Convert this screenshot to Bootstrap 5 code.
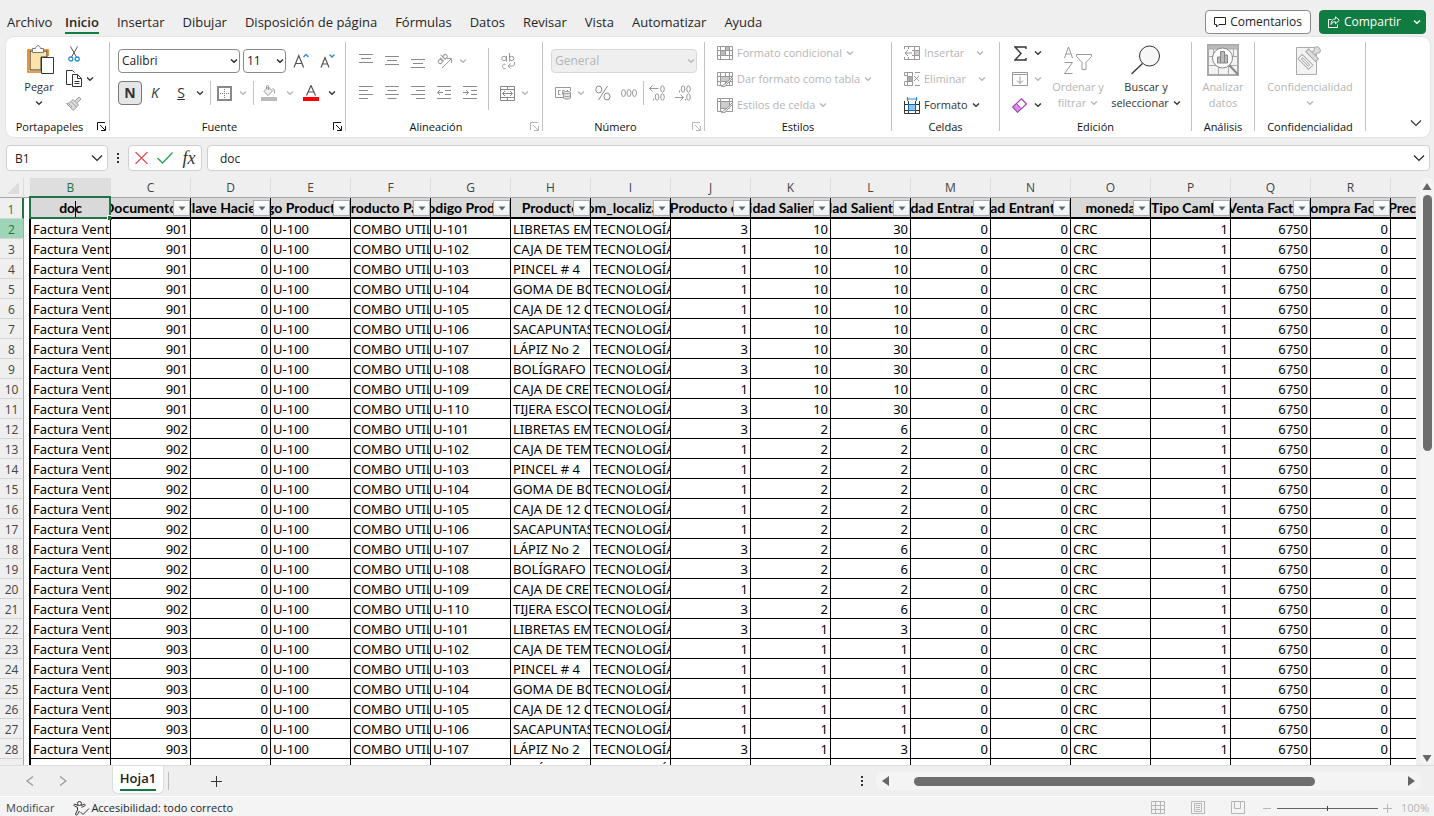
<!DOCTYPE html>
<html lang="es">
<head>
<meta charset="utf-8">
<meta name="viewport" content="width=device-width, initial-scale=1">
<title>Hoja de cálculo</title>
<link rel="stylesheet" href="https://cdn.jsdelivr.net/npm/bootstrap@5.3.0/dist/css/bootstrap.min.css">
<style>
:root{--ui:"Open Sans","Noto Sans",sans-serif;--green:#107c41;--dim:#b5b5b5}
body{font-family:var(--ui);font-size:11px;color:#222;background:#efefef}
button{color:inherit}
svg{display:block;flex:none;fill:none;stroke-width:1}
svg:not([stroke]){stroke:currentColor}
.menu{height:37px;padding:10px 8px 0 7px}
.menu-tabs{gap:18px}
.menu-tabs a{font-size:13px;line-height:24px;height:24px;color:#262626;text-decoration:none;white-space:nowrap}
.menu-tabs a.current{font-weight:600;border-bottom:2px solid var(--green)}
.menu-tabs .file{width:40px}
.menu-btn{height:24px;font-size:12px;line-height:22px;padding:0 8px;border-radius:4px}
.menu-btn.plain{background:#fff;border:1px solid #8a8a8a;color:#222}
.menu-btn.share{background:var(--green);border:1px solid var(--green);color:#fff;padding-right:4px}
.ribbon{margin:0 4px 0 6px;height:100px;padding-top:4px;background:#fff;border-radius:8px;box-shadow:0 0 2px #ccc}
.ribbon .vr{color:#999;opacity:.6}
.ribbon>.vr{height:89px;margin-top:1px;align-self:flex-start}
.group{height:96px;flex:none}
.group-body{height:78px}
.group-name{height:16px;line-height:16px;text-align:center;position:relative;color:#111}
.launch{position:absolute;right:3px;top:3px}
.tool{display:inline-flex;align-items:center;justify-content:center;flex:none;height:24px;width:26px;font-size:11px;line-height:16px;color:#333;border:0;padding:0;border-radius:4px}
.tool:disabled,.dim{color:var(--dim);opacity:1;border:0}
.tool.arrow{width:12px}
.tool.wide{width:auto;gap:4px;justify-content:flex-start}
.tool.tall{flex-direction:column;justify-content:flex-start;height:76px;white-space:nowrap}
.tall .pic{height:38px;display:flex;align-items:center}
.w20{width:20px}.w24{width:24px}.w32{width:32px}.w30{width:30px}
.pressed{background:#e6e6e6;border:1px solid #777}
.glyph{font-size:14px}
.strip{padding-top:8px;gap:8px}
.combo{height:24px;border:1px solid #8a8a8a;border-radius:4px;background:#fff;font-size:12px;line-height:20px;padding:0 3px;appearance:none;color:#222}
.pick{position:relative;display:flex}
.pick svg{position:absolute;right:2px;top:8px;pointer-events:none}
.combo:disabled{background:#efefef;border-color:#d8d8d8;color:var(--dim);opacity:1}
.formula{padding:8px 4px 7px 6px;gap:5px}
.field{height:26px;background:#fff;border:1px solid #cfcfcf;border-radius:4px;font-size:12px;line-height:24px}
.field input{border:0;background:none;outline:0;padding:1px 0 0;width:100%;font-size:12px;color:#222}
.grid-wrap{flex:1 1 0;min-height:0}
.sheet-view{overflow:hidden;flex:1 1 0;min-width:0;background:#fff}
.grid{table-layout:fixed;border-collapse:separate;border-spacing:0;width:1471px;font-family:"Noto Sans",sans-serif;font-size:13px;line-height:17px;color:#000}
.grid col.c-num{width:24px}.grid col.c-gap{width:7px}.grid col.c-data{width:80px}
.grid th,.grid td{padding:2px 0 0;height:20px;overflow:hidden;white-space:nowrap;font-weight:400}
.grid thead th{background:#efefef;color:#444;font-family:var(--ui);font-size:12px;text-align:center;padding:0;border-bottom:1px solid #a6a6a6;border-right:1px solid #dcdcdc}
.grid thead th.on{background:#dedede;color:#217346}
.grid tbody th{background:#efefef;color:#444;font-family:var(--ui);font-size:12px;text-align:center;border-right:1px solid #a6a6a6;border-bottom:1px solid #d4d4d4}
.grid tbody th.on{background:#9fd5b7;color:#217346}
.grid tbody th.cur{border-right:2px solid #217346;color:#217346}
.grid td{border-right:1px solid #000;border-bottom:1px solid #000;padding:2px 2px 0;background:#fff}
.grid td.gap-col{border-bottom:0;border-right:2px solid #000}
.grid td.n{text-align:right}
.grid .titles td{height:21px;padding:0;line-height:19px;background:#d9d9d9;border-bottom:2px solid #000;position:relative;font-family:Lato,"Noto Sans",sans-serif;font-size:14px;font-weight:700}
.grid .titles td.gap-col{background:#fff;border-bottom:0}
.grid .titles td.sel{overflow:visible}
.title-text{display:flex;justify-content:center;overflow:hidden}
.title-text span{flex:none}
.filter{position:absolute;right:0;top:2px;width:17px;height:16px;padding:0;border:1px solid #a9adb5;background:linear-gradient(#fff,#eceef2);display:flex;align-items:center;justify-content:center;color:#666}
.sel-box{position:absolute;inset:-2px -1px -2px -2px;border:2px solid #217346}
.sel-box::after{content:"";position:absolute;right:-3px;bottom:-3px;width:5px;height:5px;background:#217346;border:1px solid #fff;border-width:1px 0 0 1px}
.caret{display:inline-block;width:1px;height:16px;background:#000;margin-right:-1px;vertical-align:middle}
.track{background:#f4f4f4;border-radius:7px}
.track-v{width:14px;margin-left:4px;padding:4px 0 2px}
.track-h{width:38%;height:18px;margin:0 13px 0 8px;padding:0 5px}
.thumb{background:#6e6e6e;border-radius:5px}
.sheets{height:31px;background:#efefef;border-top:1px solid #dcdcdc}
.sheet-tab{background:#fff;border:1px solid #dcdcdc;border-top:0;border-radius:0 0 6px 6px;height:28px;width:52px;margin-left:36px;color:#222;text-decoration:none;font-size:13px;font-weight:600;display:flex;justify-content:center;align-self:flex-start}
.sheet-tab span{height:25px;line-height:24px;border-bottom:2px solid var(--green)}
.status{height:20px;padding-top:3px;background:#f4f4f4;border-top:1px solid #fff;color:#444}
.zoom-range{appearance:none;width:101px;height:9px;background:linear-gradient(#666,#666) center/100% 1px no-repeat}
.zoom-range::-webkit-slider-thumb{appearance:none;width:1px;height:5px;background:#444;border:0;border-radius:0}
</style>
</head>
<body class="vh-100 d-flex flex-column overflow-hidden">

<svg width="0" height="0" class="position-absolute" aria-hidden="true">
  <symbol id="chev" viewBox="0 0 8 8"><path d="M1 2.5 4 5.3 7 2.5" stroke-width="1.3"/></symbol>
  <symbol id="chev-lg" viewBox="0 0 12 8"><path d="M1 1.5 6 6.5 11 1.5" stroke-width="1.2"/></symbol>
  <symbol id="launch" viewBox="0 0 9 9"><path d="M.5 8V.5H8M3 3l5 5M8.5 4v4.5H4"/></symbol>
  <symbol id="tri" viewBox="0 0 8 5"><path d="M.5.5h7L4 4.5z" fill="currentColor" stroke="none"/></symbol>
</svg>

<header class="menu d-flex align-items-start justify-content-between">
  <nav class="menu-tabs d-flex" aria-label="Cinta">
    <a href="#" class="file">Archivo</a><a href="#" class="current">Inicio</a><a href="#">Insertar</a><a href="#">Dibujar</a><a href="#">Disposición de página</a><a href="#">Fórmulas</a><a href="#">Datos</a><a href="#">Revisar</a><a href="#">Vista</a><a href="#">Automatizar</a><a href="#">Ayuda</a>
  </nav>
  <div class="d-flex gap-2">
    <button class="btn menu-btn plain d-flex align-items-center gap-1"><svg width="12" height="12" viewBox="0 0 12 12"><path d="M.5 1.5h11v7H5L2.5 11V8.500h-2z"/></svg>Comentarios</button>
    <button class="btn menu-btn share d-flex align-items-center gap-1"><svg width="12" height="12" viewBox="0 0 12 12"><path d="M3.500 3.500h-3v8h9V8.500M7.500.8l3.800 3.500-3.800 3.500V5.800C5 5.800 4 6.800 3 8.500 3 5.500 4.500 3 7.500 2.800z"/></svg>Compartir<svg width="8" height="8" class="ms-2"><use href="#chev"/></svg></button>
  </div>
</header>

<section class="ribbon d-flex align-items-start" aria-label="Inicio">

  <div class="group" style="width:103px">
    <div class="group-body d-flex ps-2">
      <button class="btn tool tall" style="width:50px"><span class="pic ps-1">
        <svg width="28" height="30" viewBox="0 0 28 30"><path d="M3 6h17v6h-6v13H3z" fill="#fde3a8"/><path d="M7 5H1v22h13M17 5h4v6" stroke="#e07c10" stroke-width="1.600"/><path d="M5.500 7.500v-4h3C9-.2 13-.2 13.500 3.500h3v4z" fill="#fff" stroke="#777"/><path d="M14.500 12.500h12v16h-12z" fill="#fff" stroke="#333"/></svg></span>
        <span>Pegar</span><svg width="8" height="8" class="mt-1"><use href="#chev"/></svg></button>
      <div class="d-flex flex-column" style="width:40px">
        <button class="btn tool" style="height:25px;width:20px" aria-label="Cortar"><svg width="12" height="16" viewBox="0 0 12 16"><path d="M2.500.500 8.500 11M9.500.500 3.500 11" stroke="#555"/><circle cx="2.800" cy="13" r="2" stroke="#2a8dd4" stroke-width="1.300"/><circle cx="9.200" cy="13" r="2" stroke="#2a8dd4" stroke-width="1.300"/></svg></button>
        <div class="d-flex"><button class="btn tool" style="height:25px;width:20px" aria-label="Copiar"><svg width="16" height="17" viewBox="0 0 16 17"><path d="M5.500 14.500h-5V.500h6l2 2M6.500 4.500h5l4 4v8h-9zM11.500 4.500v4h4M8.500 11.500h5M8.500 13.500h5"/></svg></button><button class="btn tool arrow" style="height:25px" aria-label="Opciones de copiar"><svg width="8" height="8"><use href="#chev"/></svg></button></div>
        <button class="btn tool" disabled style="height:25px;width:20px" aria-label="Copiar formato"><svg width="16" height="15" viewBox="0 0 16 15" stroke="#999"><path d="m9 5 4-4 2 2-4 4M7 3.500 12.500 9 10.500 11 5 5.500zM5 5.500C4 7 2.500 7.500.500 7.500L7 14.300c1-.8 3-2 3.500-3.300M3 8l1 1.500M5 9.500l1 2" fill="#ddd"/></svg></button>
      </div>
    </div>
    <div class="group-name pe-3">Portapapeles<svg class="launch" width="9" height="9"><use href="#launch"/></svg></div>
  </div>
  <div class="vr"></div>

  <div class="group" style="width:235px">
    <div class="group-body d-flex flex-column strip ps-2">
      <div class="d-flex">
        <div class="pick"><select class="combo" style="width:122px" aria-label="Fuente"><option>Calibri</option></select><svg width="8" height="8"><use href="#chev"/></svg></div>
        <div class="pick" style="margin-left:3px"><select class="combo" style="width:43px" aria-label="Tamaño"><option>11</option></select><svg width="8" height="8"><use href="#chev"/></svg></div>
        <button class="btn tool" style="margin-left:2px" aria-label="Aumentar"><svg width="16" height="16" viewBox="0 0 16 16"><path d="M1 14.500 5.800 2.500l4.800 12M2.800 10.500h6" stroke="#555" stroke-width="1.200"/><path d="M10.500 4 13 1.500 15.500 4" stroke="#2a8dd4" stroke-width="1.300"/></svg></button>
        <button class="btn tool" aria-label="Disminuir"><svg width="16" height="16" viewBox="0 0 16 16"><path d="M2 14.500 6 4.500l4 10M3.500 11h5" stroke="#555" stroke-width="1.200"/><path d="M10.500 1.500 13 4l2.500-2.500" stroke="#2a8dd4" stroke-width="1.300"/></svg></button>
      </div>
      <div class="d-flex">
        <button class="btn tool w24 pressed glyph"><b>N</b></button>
        <button class="btn tool glyph"><i>K</i></button>
        <button class="btn tool glyph"><u>S</u></button>
        <button class="btn tool arrow" aria-label="Subrayado"><svg width="8" height="8"><use href="#chev"/></svg></button>
        <div class="vr ms-1"></div>
        <button class="btn tool" disabled aria-label="Bordes"><svg width="15" height="15" viewBox="0 0 15 15"><path d="M1 1h13v13H1z" stroke="#888" stroke-width="2"/><path d="M7.500 3v9M3 7.500h9" stroke="#777" stroke-dasharray="1 1"/></svg></button>
        <button class="btn tool arrow" disabled aria-label="Tipos de borde"><svg width="8" height="8"><use href="#chev"/></svg></button>
        <div class="vr ms-1"></div>
        <button class="btn tool w30" disabled aria-label="Relleno"><svg width="16" height="16" viewBox="0 0 16 16"><path d="M0 12h16v4H0z" fill="#bbb" stroke="none"/><path d="m3 6.500 4.500-4.500 4 4L7 10.500zM7.500 5V1.500C7.500 0 5.500 0 5.500 1.500V4M11.500 3.500c2 .5 2 2 2 5" stroke="#999" fill="#eee"/></svg></button>
        <button class="btn tool arrow" disabled aria-label="Color de relleno"><svg width="8" height="8"><use href="#chev"/></svg></button>
        <button class="btn tool w30" aria-label="Color de fuente"><svg width="16" height="16" viewBox="0 0 16 16"><path d="M0 12h16v4H0z" fill="#f00" stroke="none"/><path d="M3.500 10.500 8 .500l4.500 10M5 7h6" stroke="#555" stroke-width="1.200"/></svg></button>
        <button class="btn tool arrow" aria-label="Colores de fuente"><svg width="8" height="8"><use href="#chev"/></svg></button>
      </div>
    </div>
    <div class="group-name pe-3">Fuente<svg class="launch" width="9" height="9"><use href="#launch"/></svg></div>
  </div>
  <div class="vr"></div>

  <div class="group" style="width:196px">
    <div class="group-body d-flex" style="padding-left:7px">
      <div class="d-flex flex-column strip" style="width:135px">
        <div class="d-flex">
          <button class="btn tool" disabled aria-label="Arriba"><svg width="14" height="14" viewBox="0 0 14 14" stroke="#8a8a8a"><path d="M0 .500h14M2 4.500h10M0 8.500h14"/></svg></button>
          <button class="btn tool" disabled aria-label="Medio"><svg width="14" height="14" viewBox="0 0 14 14" stroke="#8a8a8a"><path d="M0 2.500h14M2 6.500h10M0 10.500h14"/></svg></button>
          <button class="btn tool" disabled aria-label="Abajo"><svg width="14" height="14" viewBox="0 0 14 14" stroke="#8a8a8a"><path d="M0 5.500h14M2 9.500h10M0 13.500h14"/></svg></button>
          <button class="btn tool" disabled aria-label="Orientación"><svg width="17" height="16" viewBox="0 0 17 16" stroke="#999"><g transform="rotate(-45 6 6)"><circle cx="3" cy="6.500" r="2"/><path d="M5.500 4v5M8 2v7"/><circle cx="10" cy="6.500" r="2"/></g><path d="m6 15 9.500-9.500M11 5.500h4.500V10"/></svg></button>
          <button class="btn tool arrow" disabled aria-label="Orientaciones"><svg width="8" height="8"><use href="#chev"/></svg></button>
        </div>
        <div class="d-flex">
          <button class="btn tool" disabled aria-label="Izquierda"><svg width="14" height="14" viewBox="0 0 14 14" stroke="#8a8a8a"><path d="M0 .500h14M0 4.500h9M0 8.500h14M0 12.500h9"/></svg></button>
          <button class="btn tool" disabled aria-label="Centro"><svg width="14" height="14" viewBox="0 0 14 14" stroke="#8a8a8a"><path d="M0 .500h14M2.500 4.500h9M0 8.500h14M2.500 12.500h9"/></svg></button>
          <button class="btn tool" disabled aria-label="Derecha"><svg width="14" height="14" viewBox="0 0 14 14" stroke="#8a8a8a"><path d="M0 .500h14M5 4.500h9M0 8.500h14M5 12.500h9"/></svg></button>
          <button class="btn tool" disabled aria-label="Menos sangría"><svg width="14" height="14" viewBox="0 0 14 14" stroke="#8a8a8a"><path d="M0 .500h14M8 4.500h6M8 8.500h6M0 12.500h14M6 6.500H.500M3 4 .500 6.500 3 9"/></svg></button>
          <button class="btn tool" disabled aria-label="Más sangría"><svg width="14" height="14" viewBox="0 0 14 14" stroke="#8a8a8a"><path d="M0 .500h14M8 4.500h6M8 8.500h6M0 12.500h14M0 6.500h5.500M3 4l2.500 2.500L3 9"/></svg></button>
        </div>
      </div>
      <div class="vr" style="height:62px;margin-top:7px"></div>
      <div class="strip d-flex flex-column" style="padding-left:6px">
        <button class="btn tool" disabled aria-label="Ajustar texto"><svg width="16" height="17" viewBox="0 0 16 17" stroke="#999"><circle cx="4" cy="5.500" r="2.200"/><path d="M6.500 3v5.500M9.500 0v8.500"/><circle cx="11.700" cy="5.500" r="2.200"/><path d="M5.500 11.500c-4-1.500-4 5.500 0 4M14.500 9v2c0 1.500-1 2-2 2H8M10.500 10.500 8 13l2.500 2.500"/></svg></button>
        <div class="d-flex"><button class="btn tool" style="width:24px" disabled aria-label="Combinar"><svg width="15" height="15" viewBox="0 0 15 15" stroke="#888"><path d="M.500.500h14v14H.500zM0 3.500h15M0 11.500h15M7.500 0v3M7.500 12v3M2.500 7.500h10M5 5 2.500 7.500 5 10M10 5l2.500 2.500L10 10"/></svg></button><button class="btn tool arrow" disabled aria-label="Opciones de combinar"><svg width="8" height="8"><use href="#chev"/></svg></button></div>
      </div>
    </div>
    <div class="group-name pe-3">Alineación<svg class="launch dim" width="9" height="9"><use href="#launch"/></svg></div>
  </div>
  <div class="vr"></div>

  <div class="group" style="width:161px">
    <div class="group-body d-flex flex-column strip ps-2">
      <div class="pick" style="width:146px"><select class="combo w-100" disabled aria-label="Formato de número"><option>General</option></select><svg class="dim" width="8" height="8"><use href="#chev"/></svg></div>
      <div class="d-flex">
        <button class="btn tool w24" disabled aria-label="Moneda"><svg width="17" height="14" viewBox="0 0 17 14" stroke="#999"><path d="M8 11.500H.500v-10h15V5M5.500 4.500h-2v4h2M7.500 8.500v-4h2M12 4.500h1"/><path d="M8.500 6.500c0-1.500 7-1.500 7 0v5.500c0 1.500-7 1.500-7 0zM8.500 6.500c0 1.500 7 1.500 7 0M8.500 9.300c0 1.500 7 1.500 7 0" fill="#ddd"/></svg></button>
        <button class="btn tool arrow" disabled aria-label="Monedas"><svg width="8" height="8"><use href="#chev"/></svg></button>
        <button class="btn tool w32" disabled aria-label="Porcentaje"><svg width="16" height="16" viewBox="0 0 16 16" stroke="#888"><ellipse cx="3.800" cy="4.500" rx="3" ry="3.500"/><ellipse cx="12" cy="11.500" rx="3" ry="3.500"/><path d="M12.500 1 3.500 15"/></svg></button>
        <button class="btn tool w20" disabled aria-label="Millares"><svg width="16" height="8" viewBox="0 0 16 8" stroke="#999"><ellipse cx="2.500" cy="4" rx="2" ry="3.500"/><ellipse cx="8" cy="4" rx="2" ry="3.500"/><ellipse cx="13.500" cy="4" rx="2" ry="3.500"/></svg></button>
        <div class="vr ms-1"></div>
        <button class="btn tool" disabled aria-label="Aumentar decimales"><svg width="16" height="16" viewBox="0 0 16 16" stroke="#999"><ellipse cx="13.500" cy="4" rx="1.800" ry="3.200"/><ellipse cx="8" cy="12" rx="1.800" ry="3.200"/><ellipse cx="13.500" cy="12" rx="1.800" ry="3.200"/><path d="M9.500 3.500H.500M3.500.500l-3 3 3 3M4.500 13.500v2"/></svg></button>
        <button class="btn tool" disabled aria-label="Disminuir decimales"><svg width="16" height="16" viewBox="0 0 16 16" stroke="#999"><ellipse cx="8" cy="4" rx="1.800" ry="3.200"/><ellipse cx="13.500" cy="4" rx="1.800" ry="3.200"/><ellipse cx="13.500" cy="12" rx="1.800" ry="3.200"/><path d="M0 12.500h8.500M5.500 9.500l3 3-3 3M4.500 5.500v2M10.500 14v1.500"/></svg></button>
      </div>
    </div>
    <div class="group-name pe-3">Número<svg class="launch dim" width="9" height="9"><use href="#launch"/></svg></div>
  </div>
  <div class="vr"></div>

  <div class="group" style="width:186px">
    <div class="group-body d-flex flex-column align-items-start" style="gap:2px;padding-left:12px">
      <button class="btn tool wide" disabled><svg width="16" height="15" viewBox="0 0 16 15" stroke="#999"><path d="M.500.500h15v13H.500zM0 4.500h16M0 9.500h16M3.500 0v14M8.500 0v4M12.500 0v14"/><path d="M3.500 4.500h5v5h-5zM8.500.500h4v4h-4z" fill="#bbb"/></svg>Formato condicional<svg width="8" height="8"><use href="#chev"/></svg></button>
      <button class="btn tool wide" disabled><svg width="16" height="15" viewBox="0 0 16 15" stroke="#999"><path d="M.500.500h15v13H.500zM0 4.500h16M0 9.500h16M3.500 0v14M8.500 0v14M12.500 0v14"/><path d="M3.500 4.500h9v5h-9z" fill="#ccc"/><path d="m16 4-8 8c-2 0-1 2-4 2 3 1.500 5.500 0 5.500-1.500L16 6z" fill="#eee"/></svg>Dar formato como tabla<svg width="8" height="8"><use href="#chev"/></svg></button>
      <button class="btn tool wide" disabled><svg width="16" height="15" viewBox="0 0 16 15" stroke="#999"><path d="M.500.500h15v13H.500zM0 3.500h16M3.500 0v14M12.500 0v4"/><path d="M3.500 3.500h9v7h-9z" fill="#ccc"/><path d="m16 4-8 8c-2 0-1 2-4 2 3 1.500 5.500 0 5.500-1.500L16 6z" fill="#eee"/></svg>Estilos de celda<svg width="8" height="8"><use href="#chev"/></svg></button>
    </div>
    <div class="group-name">Estilos</div>
  </div>
  <div class="vr"></div>

  <div class="group" style="width:107px">
    <div class="group-body d-flex flex-column align-items-start" style="gap:2px;padding-left:12px">
      <button class="btn tool wide" disabled><svg width="16" height="15" viewBox="0 0 16 15" stroke="#999"><path d="M.500 3V.500h15v13H.500V11M8 4.500h8M8 9.500h8M4.500 0v3M4.500 11v3M10.500 0v14M8 7H1M4 4 1 7l3 3"/><path d="M10.500 4.500h5v5h-5z" fill="#ccc"/></svg>Insertar<svg width="8" height="8" class="ms-2"><use href="#chev"/></svg></button>
      <button class="btn tool wide" disabled><svg width="16" height="15" viewBox="0 0 16 15" stroke="#999"><path d="M9 .500H.500v3h3v6h-3v4H9M3.500 0v14M8.500 0v4M8.500 10v4M10 4l5 5M15 4l-5 5M11 .500h5M11 13.500h5"/><path d="M3.500 4.500h5v5h-5z" fill="#aaa"/></svg>Eliminar<svg width="8" height="8" class="ms-2"><use href="#chev"/></svg></button>
      <button class="btn tool wide"><svg width="16" height="17" viewBox="0 0 16 17"><path d="M.500 4v12.500h15V4M0 7.500h16M0 13.500h16M4.500 4v12M11.500 4v12"/><path d="M4.500 7.500h7v6h-7z" fill="#8fc6f2" stroke="#0f6cbd"/><path d="M3.500 0v4M12.500 0v4M4 2h8" stroke="#2a8dd4" stroke-width="1.200"/></svg>Formato<svg width="8" height="8"><use href="#chev"/></svg></button>
    </div>
    <div class="group-name">Celdas</div>
  </div>
  <div class="vr"></div>

  <div class="group" style="width:191px">
    <div class="group-body d-flex" style="padding-left:10px">
      <div class="d-flex flex-column" style="gap:2px;width:38px">
        <div class="d-flex"><button class="btn tool w20" aria-label="Suma"><svg width="13" height="15" viewBox="0 0 13 15"><path d="M12 3V1H1l6 6.500L1 14h11v-2" stroke-width="1.400"/></svg></button><button class="btn tool arrow" style="margin-left:2px" aria-label="Funciones"><svg width="8" height="8"><use href="#chev"/></svg></button></div>
        <div class="d-flex"><button class="btn tool w20" disabled aria-label="Rellenar"><svg width="16" height="14" viewBox="0 0 16 14" stroke="#999"><path d="M.500.500h15v13H.500zM0 2.500h16M8 4.500v7M5 8.500l3 3 3-3"/></svg></button><button class="btn tool arrow" style="margin-left:2px" disabled aria-label="Opciones de relleno"><svg width="8" height="8"><use href="#chev"/></svg></button></div>
        <div class="d-flex"><button class="btn tool w20" aria-label="Borrar"><svg width="16" height="15" viewBox="0 0 16 15" stroke="#a23fb5"><path d="M.800 9 9.500.800 14.500 6l-9 8.200z" fill="#fff" stroke-width="1.200"/><path d="M.800 9 4.500 5.500 9.300 10.700 5.500 14.200z" fill="#d58ee0"/></svg></button><button class="btn tool arrow" style="margin-left:2px" aria-label="Opciones de borrar"><svg width="8" height="8"><use href="#chev"/></svg></button></div>
      </div>
      <button class="btn tool tall" disabled style="width:60px"><span class="pic"><svg width="30" height="29" viewBox="0 0 30 29" stroke="#999"><path d="M1.500 12 5.500 1l4 11M3 8h5M1.500 16.500h8L1.500 27.500h8M13.500 8.500h15v2l-5.500 6v7h-4v-7l-5.500-6z"/></svg></span><span>Ordenar y</span><span class="d-flex align-items-center gap-1">filtrar<svg width="8" height="8"><use href="#chev"/></svg></span></button>
      <button class="btn tool tall" style="width:76px"><span class="pic"><svg width="30" height="30" viewBox="0 0 30 30"><circle cx="18.500" cy="11" r="10" fill="#f7f7f7"/><path d="M11.500 18.500.500 29" stroke-width="1.300"/></svg></span><span>Buscar y</span><span class="d-flex align-items-center gap-1">seleccionar<svg width="8" height="8"><use href="#chev"/></svg></span></button>
    </div>
    <div class="group-name">Edición</div>
  </div>
  <div class="vr"></div>

  <div class="group" style="width:62px">
    <div class="group-body d-flex justify-content-center">
      <button class="btn tool tall w-100" disabled><span class="pic"><svg width="32" height="32" viewBox="0 0 32 32" stroke="#aaa"><path d="M1 1h30v30H1z" stroke-width="2" fill="#f3f3f3"/><path d="M1 1h30v4H1z" fill="#bbb"/><path d="M2 12.500h28M2 21.500h28M11.500 22v9M21.500 22v9M6.500 5v7M26.500 5v7"/><circle cx="15.500" cy="14" r="10" fill="#fff" stroke="#888"/><path d="M10.500 13h3v6h-3zM13.500 7.500h4V19h-4zM17.500 11h3v8h-3z" fill="#bbb" stroke="#888"/><path d="m22.500 21.500 8.500 9" stroke="#888" stroke-width="2"/></svg></span><span>Analizar</span><span>datos</span></button>
    </div>
    <div class="group-name">Análisis</div>
  </div>
  <div class="vr"></div>

  <div class="group" style="width:110px">
    <div class="group-body d-flex justify-content-center">
      <button class="btn tool tall w-100" disabled><span class="pic"><svg width="28" height="32" viewBox="0 0 28 32" stroke="#aaa"><path d="M.500 3.500h20v27H.500z" fill="#f3f3f3"/><g transform="rotate(45 14 14)"><path d="M6 17h15v6H6z" fill="#fff"/><path d="M8.500 19h10v2h-10z"/><path d="M6.500 8.500h14v4h-14zM11.500 8.500v-3c-2-1.500-2-5 2-5s4 3.500 2 5v3" fill="#ddd"/></g></svg></span><span>Confidencialidad</span><svg width="8" height="8" class="mt-1"><use href="#chev"/></svg></button>
    </div>
    <div class="group-name">Confidencialidad</div>
  </div>
  <div class="vr"></div>
  <button class="btn tool ms-auto align-self-end mb-1" aria-label="Contraer la cinta" style="width:28px;height:20px"><svg width="12" height="8"><use href="#chev-lg"/></svg></button>
</section>

<section class="formula d-flex align-items-center">
  <div class="field d-flex align-items-center px-1" style="width:102px"><input class="ps-1" value="B1" aria-label="Cuadro de nombres"><svg width="12" height="8"><use href="#chev-lg"/></svg></div>
  <svg width="10" height="12" viewBox="0 0 10 12"><path d="M4 1h2v2H4zM4 5h2v2H4zM4 9h2v2H4z" fill="#333" stroke="none"/></svg>
  <div class="field d-flex align-items-center justify-content-between px-1" style="width:74px">
    <button class="btn tool w20" style="width:16px" aria-label="Cancelar"><svg width="13" height="12" viewBox="0 0 13 12"><path d="m.500 0 12 12M12.500 0l-12 12" stroke="#e5484d" stroke-width="1.200"/></svg></button>
    <button class="btn tool w24" aria-label="Introducir"><svg width="16" height="12" viewBox="0 0 16 12"><path d="m.500 6 5 5L15.500.500" stroke="#2f9e55" stroke-width="1.300"/></svg></button>
    <button class="btn tool" style="width:16px" aria-label="Insertar función"><i style="font:italic 18px 'Liberation Serif',serif">fx</i></button>
  </div>
  <div class="field d-flex align-items-center flex-grow-1 ps-2 pe-1"><input class="ps-1" value="doc" aria-label="Barra de fórmulas"><svg width="12" height="8"><use href="#chev-lg"/></svg></div>
</section>

<main class="grid-wrap d-flex">
  <div class="sheet-view">
    <table class="grid" id="grid">
      <colgroup id="cols"><col class="c-num"><col class="c-gap"></colgroup>
      <thead><tr id="letters"><th><svg class="ms-auto me-1" width="12" height="12" viewBox="0 0 12 12"><path d="M12 0v12H0z" fill="#dcdcdc" stroke="none"/></svg></th><th></th></tr></thead>
      <tbody id="rows"></tbody>
    </table>
  </div>
  <div class="track track-v d-flex flex-column align-items-center">
    <svg width="10" height="9" viewBox="0 0 10 9"><path d="M5 1 9.500 8h-9z" fill="#666" stroke="none"/></svg>
    <div class="thumb mt-1" style="width:9px;height:44%"></div>
    <svg class="mt-auto" width="10" height="9" viewBox="0 0 10 9"><path d="M5 8 .500 1h9z" fill="#666" stroke="none"/></svg>
  </div>
</main>

<section class="sheets d-flex align-items-center">
  <button class="btn tool" style="margin-left:17px;color:#999" aria-label="Hoja anterior"><svg width="8" height="10" viewBox="0 0 8 10"><path d="M7 .500 1 5l6 4.500" stroke-width="1.200"/></svg></button>
  <button class="btn tool" style="margin-left:7px;color:#999" aria-label="Hoja siguiente"><svg width="8" height="10" viewBox="0 0 8 10"><path d="m1 .500 6 4.500-6 4.500" stroke-width="1.200"/></svg></button>
  <a href="#" class="sheet-tab"><span>Hoja1</span></a>
  <div class="vr ms-1" style="height:18px;align-self:center"></div>
  <button class="btn tool" style="margin-left:34px" aria-label="Hoja nueva"><svg width="11" height="11" viewBox="0 0 11 11"><path d="M5.500 0v11M0 5.500h11"/></svg></button>
  <svg class="ms-auto" width="10" height="12" viewBox="0 0 10 12"><path d="M3 1h2v2H3zM3 5h2v2H3zM3 9h2v2H3z" fill="#333" stroke="none"/></svg>
  <div class="track track-h d-flex align-items-center">
    <svg width="8" height="10" viewBox="0 0 8 10"><path d="M8 0v10L1 5z" fill="#666" stroke="none"/></svg>
    <div class="thumb" style="height:9px;width:75%;margin-left:25px"></div>
    <svg class="ms-auto" width="8" height="10" viewBox="0 0 8 10"><path d="M0 0v10l7-5z" fill="#666" stroke="none"/></svg>
  </div>
</section>

<footer class="status d-flex align-items-center">
  <span style="margin-left:6px">Modificar</span>
  <svg style="margin-left:19px" width="18" height="15" viewBox="0 0 18 15" stroke="#333"><circle cx="6.500" cy="2.500" r="2"/><path d="M5 4.500 1.500 3C.500 4 1 5 2 5.300l2.500 1V9l-2 4c0 1.300 1.500 1.500 2 .500L6.500 10M8 4.500 11.500 3c1 1 .500 2-.500 2.300l-2.500 1M7.500 11l2.500 2.500 6-6"/></svg>
  <span class="text-dark">Accesibilidad: todo correcto</span>
  <div class="ms-auto d-flex align-items-center dim">
    <button class="btn tool dim" aria-label="Normal" style="height:16px"><svg width="14" height="14" viewBox="0 0 14 14"><path d="M.500.500h13v12H.500zM0 4.500h14M0 8.500h14M4.500 0v13M9.500 0v13"/></svg></button>
    <button class="btn tool dim" aria-label="Diseño de página" style="height:16px;margin-left:14px"><svg width="14" height="14" viewBox="0 0 14 14"><path d="M.500.500h13v12H.500zM3.500 2.500h7v8h-7zM5 4.500h4M5 6.500h4M5 8.500h4"/></svg></button>
    <button class="btn tool dim" aria-label="Salto de página" style="height:16px;margin-left:14px"><svg width="14" height="14" viewBox="0 0 14 14"><path d="M.500.500h13v12H.500zM3.500 0v7.500h6V0"/></svg></button>
    <button class="btn tool dim w20" aria-label="Alejar" style="height:16px;margin-left:6px"><svg width="8" height="8" viewBox="0 0 8 8"><path d="M0 4.500h8"/></svg></button>
    <input type="range" class="zoom-range" aria-label="Zoom" min="0" max="100" value="50">
    <button class="btn tool dim" aria-label="Acercar" style="height:16px;width:18px"><svg width="9" height="9" viewBox="0 0 9 9"><path d="M0 4.500h9M4.500 0v9"/></svg></button>
    <span style="width:38px;text-align:center">100%</span>
  </div>
</footer>

<script>
const titles = ['doc','Documento N°','Clave Hacienda','Codigo Producto Padre','Producto Padre','Codigo Producto','Producto','Nom_localizacion','Producto ent','Cantidad Saliente Total','Cantidad Saliente Factura','Cantidad Entrante Total','Cantidad Entrante Factura','moneda','Tipo Cambio','Venta Factura','Compra Factura','Precio Ventas'];
const products = [['LIBRETAS EMPASTADAS',3],['CAJA DE TEMPERAS',1],['PINCEL # 4',1],['GOMA DE BORRAR',1],['CAJA DE 12 COLORES',1],['SACAPUNTAS',1],['LÁPIZ No 2',3],['BOLÍGRAFO NEGRO',3],['CAJA DE CREYONES',1],['TIJERA ESCOLAR',3]];
const perDoc = {901:10, 902:2, 903:1};
const text = v => `<td>${v}</td>`, num = v => `<td class="n">${v}</td>`;
cols.innerHTML += '<col class="c-data">'.repeat(titles.length);
letters.innerHTML += titles.map((_, i) => `<th${i ? '' : ' class="on"'}>${i < 17 ? String.fromCharCode(66 + i) : ''}</th>`).join('');
let html = '<tr class="titles"><th class="cur">1</th><td class="gap-col"></td>' + titles.map((t, i) => i
  ? `<td><div class="title-text"><span>${t}</span></div><button class="filter" aria-label="Filtrar ${t}"><svg width="8" height="5"><use href="#tri"/></svg></button></td>`
  : '<td class="sel"><div class="title-text"><span>do<i class="caret"></i>c</span></div><div class="sel-box"></div></td>').join('') + '</tr>';
for (let r = 2; r <= 29; r++) {
  const i = (r - 2) % 10, doc = 901 + Math.floor((r - 2) / 10), [name, per] = products[i], q = perDoc[doc];
  html += `<tr><th${r === 2 ? ' class="on"' : ''}>${r}</th><td class="gap-col"></td>` + text('Factura Venta') + num(doc) + num(0) + text('U-100') + text('COMBO UTILES')
    + text('U-' + (101 + i)) + text(name) + text('TECNOLOGÍA') + num(per) + num(q) + num(q * per) + num(0) + num(0) + text('CRC') + num(1) + num(6750) + num(0) + num('') + '</tr>';
}
rows.innerHTML = html;
</script>
<script src="https://cdn.jsdelivr.net/npm/bootstrap@5.3.0/dist/js/bootstrap.bundle.min.js"></script>
</body>
</html>
